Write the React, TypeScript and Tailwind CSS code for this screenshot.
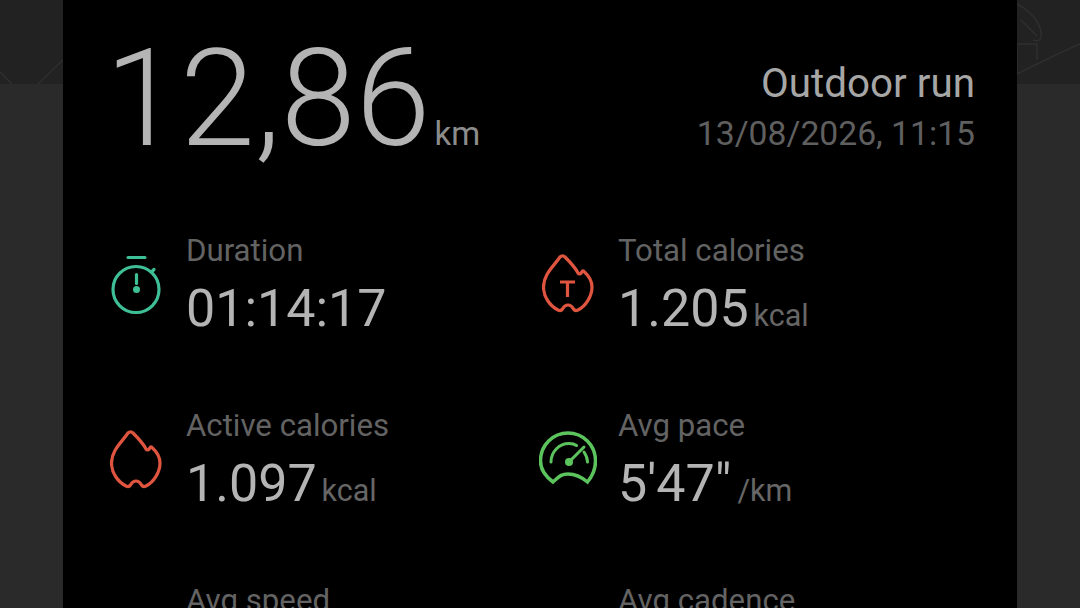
const green = '#3fbf96';
const red = '#e0553f';
const lime = '#5cc45c';

function Stopwatch() {
  return (
    <svg width="52" height="62" viewBox="0 0 52 62" fill="none" stroke={green} strokeWidth="3.200" strokeLinecap="round">
      <path d="M18 4.500h17" strokeWidth="3" />
      <circle cx="26" cy="36.500" r="23" />
      <path d="M42.500 18l1.500-1.500" />
      <path d="M26.500 21.500v9" />
      <circle cx="26.500" cy="36.500" r="3.500" fill={green} stroke="none" />
    </svg>
  );
}

function Flame({ letter }: { letter?: boolean }) {
  return (
    <svg width="52" height="60" viewBox="0 0 52 60" fill="none" stroke={red} strokeWidth="3.200" strokeLinejoin="round" strokeLinecap="round">
      <path d="M18 3c1.500-1.500 3.500-1.500 5 0C27 7 33 13 36 19c1 1.500 3 1 3.500-.5.500-1.500 1.500-2 2.500-1C47 22 50 27 50 33c0 9-6 19-14 23-2 1-3.500.5-4.500-1-1-2-3-4-5.500-4s-4.500 2-5.500 4c-1 1.500-2.500 2-4.500 1C8 52 1.500 43 1.500 33 1.500 20 12 12 18 3z" />
      {letter && <path d="M18 28h15M25.500 28v15" strokeWidth="3.200" strokeLinejoin="miter" strokeLinecap="butt" />}
    </svg>
  );
}

function Gauge() {
  return (
    <svg width="58" height="54" viewBox="0 0 58 54" fill="none" stroke={lime} strokeWidth="3.500" strokeLinecap="round">
      <path d="M14 51C6 45 1.500 37 1.500 30 1.500 14 14 2 29 2s27.500 12 27.500 28c0 7-3 15-8 21-6-5-12-8-19.500-8S20 46 14 51z" />
      <path d="M12 31c0-10 8-18.500 18-18.500 3 0 5.500.5 7.500 2" strokeWidth="3" />
      <path d="M45 21c2 3 3.500 6.500 3.500 10" strokeWidth="3" />
      <path d="M30 31l15-15" strokeWidth="3" />
      <circle cx="30" cy="31" r="4" fill={lime} stroke="none" />
    </svg>
  );
}

function Stat({ icon, label, value, unit, iconClass, unitClass }: { icon: React.ReactNode; label: string; value: string; unit?: string; iconClass: string; unitClass?: string }) {
  return (
    <div className="flex">
      <div className={iconClass}>{icon}</div>
      <div>
        <div className="text-[31.200px] leading-[34px] text-[#636363]">{label}</div>
        <div className="mt-[13px] flex items-baseline">
          <span className="text-[52px] leading-[56px] text-[#b4b4b4]">{value}</span>
          {unit && <span className={'text-[30.5px] leading-[34px] text-[#666666] ' + unitClass}>{unit}</span>}
        </div>
      </div>
    </div>
  );
}

function Side({ side }: { side: 'left' | 'right' }) {
  return (
    <div className="flex w-[63px] shrink-0 flex-col">
      <div className="h-[84px] bg-[#222222]">
        <svg width="63" height="84" viewBox="0 0 63 84" fill="none" stroke="#2f2f2f" strokeWidth="1.500">
          {side === 'left' ? (
            <path d="M0 72l12 12M38 84l25-24" />
          ) : (
            <path d="M0 4c8 4 22 14 24 28 1 8-2 10-8 8M4 20l16 16M0 44h20v16M0 74c20-10 40-20 63-30M0 44v30" />
          )}
        </svg>
      </div>
      <div className="flex-1 bg-[#2a2a2a]" />
    </div>
  );
}

export default function App() {
  return (
    <div className="flex h-[608px] w-[1080px] overflow-hidden bg-black font-['Roboto',sans-serif]">
      <Side side="left" />
      <main className="flex-1 overflow-hidden bg-black pl-[47px] pr-[42px]">
        <div className="flex h-[176px] items-start justify-between">
          <div className="-ml-[5px] flex items-baseline pt-[28px]">
            <span className="text-[135px] leading-[142px] font-light text-[#b4b4b4]">12,86</span>
            <span className="ml-[4px] text-[33px] leading-[38px] text-[#8c8c8c]">km</span>
          </div>
          <div className="pt-[62px] text-right">
            <div className="text-[40.400px] leading-[44px] text-[#a6a6a6]">Outdoor run</div>
            <div className="mt-[9px] text-[33.700px] leading-[38px] text-[#5f5f5f]">13/08/2026, 11:15</div>
          </div>
        </div>
        <div className="mt-[58px] grid grid-cols-[432px_1fr] gap-y-[72px]">
          <Stat iconClass="mr-[24px] w-[52px] pt-[19px]" icon={<Stopwatch />} label="Duration" value="01:14:17" />
          <Stat iconClass="mr-[24px] w-[52px] pt-[20px]" icon={<Flame letter />} label="Total calories" value="1.205" unit="kcal" unitClass="ml-[5px]" />
          <Stat iconClass="mr-[24px] w-[52px] pt-[21px]" icon={<Flame />} label="Active calories" value="1.097" unit="kcal" unitClass="ml-[5px]" />
          <Stat iconClass="-ml-[3px] mr-[21px] w-[58px] pt-[22px]" icon={<Gauge />} label="Avg pace" value={'5\'47"'} unit="/km" unitClass="ml-[6px]" />
          <Stat iconClass="mr-[24px] w-[52px] pt-[24px]" icon={<svg width="52" height="40" viewBox="0 0 52 40" fill="none" stroke={lime} strokeWidth="3"><circle cx="26" cy="26" r="22" /></svg>} label="Avg speed" value="10,38" />
          <Stat iconClass="mr-[24px] w-[52px] pt-[24px]" icon={<svg width="52" height="40" viewBox="0 0 52 40" fill="#e0b860"><ellipse cx="14" cy="12" rx="10" ry="10" /><ellipse cx="38" cy="12" rx="10" ry="10" /></svg>} label="Avg cadence" value="170" />
        </div>
      </main>
      <Side side="right" />
    </div>
  );
}
